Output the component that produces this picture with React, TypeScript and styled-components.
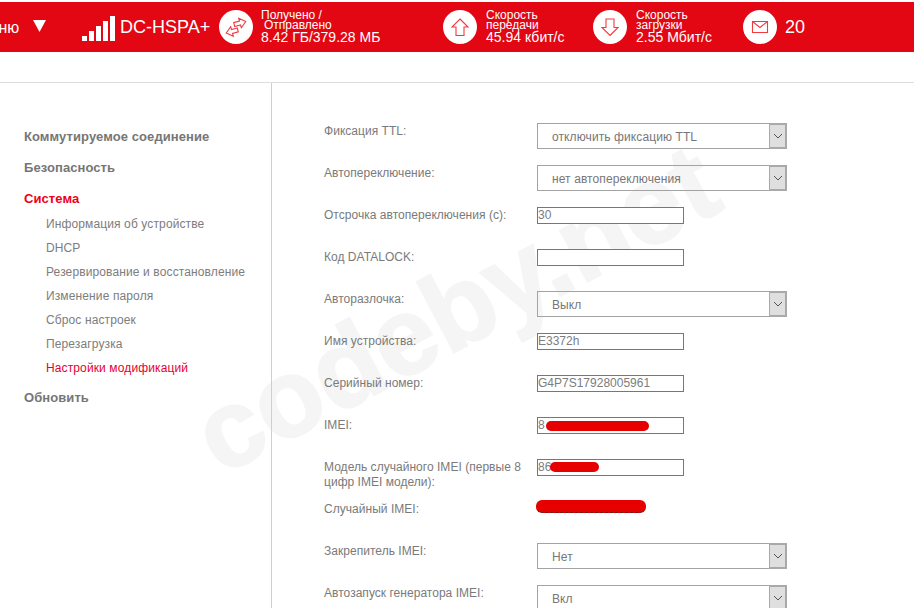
import React from "react";
import styled, { createGlobalStyle } from "styled-components";

const Global = createGlobalStyle`
  html, body { margin: 0; padding: 0; background: #fff; }
  body { font-family: "Liberation Sans", Arial, sans-serif; }
`;
const Page = styled.div`
  position: relative; width: 914px; height: 608px; overflow: hidden; background: #fff; padding-top: 2px; box-sizing: border-box;
`;
const Header = styled.header`
  height: 50px; background: #e30613; display: flex; align-items: center; color: #fff; flex: none; position: relative; z-index: 2;
`;
const MenuLabel = styled.span`
  font-size: 16px; margin-left: -24px; width: 57px; flex: none; position: relative; top: 1px;
`;
const MenuArrow = styled.svg`
  width: 13px; height: 14px; flex: none; margin-right: 36px; position: relative; top: -1px;
`;
const Signal = styled.div`
  display: flex; align-items: flex-end; gap: 2px; height: 25px; width: 33px; flex: none; margin-right: 5px; position: relative; top: 1px;
`;
const Bar = styled.i<{ $h: number }>`
  display: block; width: 5px; height: ${p => p.$h}px; background: #fff;
`;
const Network = styled.span`
  font-size: 18px; width: 99px; flex: none;
`;
const Circle = styled.div`
  width: 34px; height: 34px; border-radius: 50%; background: #fff; display: flex; align-items: center; justify-content: center; flex: none;
`;
const Stat = styled.div<{ $w: number; $pad: number }>`
  width: ${p => p.$w}px; flex: none; padding-left: ${p => p.$pad}px; box-sizing: border-box; font-size: 12px; line-height: 10px;
`;
const StatValue = styled.div`
  font-size: 14px; line-height: 15px;
`;
const Indented = styled.span`
  margin-left: 3px;
`;
const Count = styled.span`
  font-size: 18px; margin-left: 8px;
`;
const SubBar = styled.div`
  height: 30px; border-bottom: 1px solid #dedede; flex: none;
`;
const Body = styled.div`
  display: flex; height: 525px; position: relative;
`;
const Sidebar = styled.nav`
  flex: none; box-sizing: border-box; border-right: 1px solid #cfcfcf; width: 272px; padding: 46px 0 0 24px; position: relative; z-index: 1;
`;
const MainItem = styled.div<{ $active?: boolean }>`
  font-size: 13px; font-weight: 700; line-height: 16px; letter-spacing: 0.08px; color: ${p => p.$active ? "#ee0016" : "#767676"}; margin-bottom: 15px;
`;
const SubList = styled.div`
  margin: -6px 0 14px 22px; display: flex; flex-direction: column; gap: 8px;
`;
const SubItem = styled.div<{ $active?: boolean }>`
  font-size: 12px; line-height: 16px; letter-spacing: 0.12px; color: ${p => p.$active ? "#e60033" : "#7d7d7d"};
`;
const Form = styled.main`
  padding: 40px 0 0 52px; position: relative; z-index: 1;
`;
const Row = styled.div`
  display: grid; grid-template-columns: 213px 1fr; height: 42px;
`;
const Label = styled.div`
  font-size: 12px; line-height: 15px; letter-spacing: 0.03px; color: #7a7a7a; width: 205px; padding-top: 1px;
`;
const SelectBox = styled.div`
  width: 250px; height: 26px; box-sizing: border-box; border: 1px solid #a3a3a3; display: flex; align-items: center; font-size: 12px; letter-spacing: 0.1px; color: #777; padding-left: 14px; justify-content: space-between;
`;
const SelectValue = styled.span`
  padding-top: 2px;
`;
const SelectArrow = styled.div`
  width: 18px; height: 26px; box-sizing: border-box; border: 2px solid #a9a9a9; border-left-width: 1px; background: #dfdfdf; margin-right: -1px; display: flex; align-items: center; justify-content: center; flex: none;
`;
const InputBox = styled.div`
  position: relative; width: 147px; height: 17px; box-sizing: border-box; border: 1px solid #777; font-size: 12px; line-height: 15px; color: #7d7d7d; background: #fff; white-space: nowrap;
`;
const Redaction = styled.div<{ $l: number; $t: number; $w: number; $h: number }>`
  position: absolute; left: ${p => p.$l}px; top: ${p => p.$t}px; width: ${p => p.$w}px; height: ${p => p.$h}px; background: #e60000; border-radius: 6px;
`;
const DashedRedaction = styled(Redaction)`
  border-bottom: 1px dashed #6d1a1a; box-sizing: border-box;
`;
const FreeValue = styled.div`
  position: relative; height: 17px;
`;
const Watermark = styled.div`
  position: absolute; left: 203px; top: 393px; font-size: 110px; line-height: 100px; font-weight: 700; color: #f5f5f5; -webkit-text-stroke: 2px #f5f5f5; transform: rotate(-28deg); transform-origin: left center; white-space: nowrap;
`;

const Chevron = () => (
  <svg width="10" height="6" viewBox="0 0 10 6"><path d="M1 1l4 4 4-4" fill="none" stroke="#555" strokeWidth="1" /></svg>
);
const Sel = ({ v }: { v: string }) => (
  <SelectBox><SelectValue>{v}</SelectValue><SelectArrow><Chevron /></SelectArrow></SelectBox>
);
const Icon = ({ children }: { children: React.ReactNode }) => (
  <Circle><svg width="24" height="24" viewBox="0 0 24 24" fill="none" stroke="#f4393f" strokeWidth="1.1">{children}</svg></Circle>
);

export default function App() {
  return (
    <Page>
      <Global />
      <Watermark>codeby.net</Watermark>
      <Header>
        <MenuLabel>Меню</MenuLabel>
        <MenuArrow viewBox="0 0 13 14"><path d="M0 1h13L6.500 13z" fill="#fff" /></MenuArrow>
        <Signal>{[5, 10, 15, 20, 25].map(h => <Bar key={h} $h={h} />)}</Signal>
        <Network>DC-HSPA+</Network>
        <Icon>
          <path d="M10 6h6V3l6 5-6 5v-3h-6z" transform="rotate(-15 16 8)" />
          <path d="M14 14.500H8v-3l-6 5 6 5v-3h6z" transform="rotate(-15 8 16.500)" />
        </Icon>
        <Stat $w={190} $pad={8}>
          <div>Получено /</div>
          <div><Indented>Отправлено</Indented></div>
          <StatValue>8.42 ГБ/379.28 МБ</StatValue>
        </Stat>
        <Icon><path d="M12 4l8 8h-4v8.500H8V12H4z" /></Icon>
        <Stat $w={116} $pad={9}>
          <div>Скорость</div>
          <div>передачи</div>
          <StatValue>45.94 кбит/с</StatValue>
        </Stat>
        <Icon><path d="M12 20.500l8-8h-4V4H8v8.500H4z" /></Icon>
        <Stat $w={116} $pad={9}>
          <div>Скорость</div>
          <div>загрузки</div>
          <StatValue>2.55 Мбит/с</StatValue>
        </Stat>
        <Icon>
          <path d="M4.500 6.500h15v11h-15z" />
          <path d="M4.500 6.500l7.500 6 7.500-6" />
        </Icon>
        <Count>20</Count>
      </Header>
      <SubBar />
      <Body>
        <Sidebar>
          <MainItem>Коммутируемое соединение</MainItem>
          <MainItem>Безопасность</MainItem>
          <MainItem $active>Система</MainItem>
          <SubList>
            <SubItem>Информация об устройстве</SubItem>
            <SubItem>DHCP</SubItem>
            <SubItem>Резервирование и восстановление</SubItem>
            <SubItem>Изменение пароля</SubItem>
            <SubItem>Сброс настроек</SubItem>
            <SubItem>Перезагрузка</SubItem>
            <SubItem $active>Настройки модификаций</SubItem>
          </SubList>
          <MainItem>Обновить</MainItem>
        </Sidebar>
        <Form>
          <Row><Label>Фиксация TTL:</Label><Sel v="отключить фиксацию TTL" /></Row>
          <Row><Label>Автопереключение:</Label><Sel v="нет автопереключения" /></Row>
          <Row><Label>Отсрочка автопереключения (с):</Label><InputBox>30</InputBox></Row>
          <Row><Label>Код DATALOCK:</Label><InputBox /></Row>
          <Row><Label>Авторазлочка:</Label><Sel v="Выкл" /></Row>
          <Row><Label>Имя устройства:</Label><InputBox>E3372h</InputBox></Row>
          <Row><Label>Серийный номер:</Label><InputBox>G4P7S17928005961</InputBox></Row>
          <Row><Label>IMEI:</Label><InputBox>8<Redaction $l={8} $t={3} $w={103} $h={10} /></InputBox></Row>
          <Row><Label>Модель случайного IMEI (первые 8 цифр IMEI модели):</Label><InputBox>86<Redaction $l={12} $t={2} $w={49} $h={10} /></InputBox></Row>
          <Row><Label>Случайный IMEI:</Label><FreeValue><DashedRedaction $l={-1} $t={-1} $w={110} $h={13} /></FreeValue></Row>
          <Row><Label>Закрепитель IMEI:</Label><Sel v="Нет" /></Row>
          <Row><Label>Автозапуск генератора IMEI:</Label><Sel v="Вкл" /></Row>
        </Form>
      </Body>
    </Page>
  );
}
